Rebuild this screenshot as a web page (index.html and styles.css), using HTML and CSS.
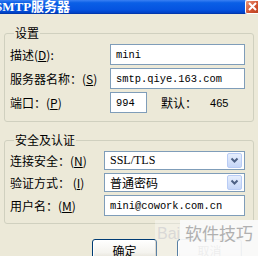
FILE: index.html
```html
<!DOCTYPE html>
<html>
<head>
<meta charset="utf-8">
<link rel="stylesheet" href="styles.css">
</head>
<body>
<div class="window">
  <div class="titlebar">
    <span class="title">SMTP服务器</span>
    <span class="close"><svg width="9" height="9" viewBox="0 0 9 9"><path d="M1 1L8 8M8 1L1 8" stroke="#fff" stroke-width="2"/></svg></span>
  </div>
  <div class="content">
    <fieldset class="group g1">
      <legend>设置</legend>
      <div class="row">
        <span class="label w1">描述(<u>D</u>):</span>
        <div class="field grow"><span class="mono">mini</span></div>
      </div>
      <div class="row">
        <span class="label w1">服务器名称：(<u>S</u>)</span>
        <div class="field grow"><span class="mono">smtp.qiye.163.com</span></div>
      </div>
      <div class="row">
        <span class="label w1">端口：(<u>P</u>)</span>
        <div class="field port"><span class="mono">994</span></div>
        <span class="label def">默认：</span>
        <span class="label num">465</span>
      </div>
    </fieldset>
    <fieldset class="group g2">
      <legend>安全及认证</legend>
      <div class="row r2">
        <span class="label w2">连接安全：(<u>N</u>)</span>
        <div class="field grow select"><span class="serif">SSL/TLS</span><span class="drop"><svg width="9" height="7" viewBox="0 0 9 7"><path d="M1.5 1.5L4.5 4.5L7.5 1.5" fill="none" stroke="#4D6185" stroke-width="2"/></svg></span></div>
      </div>
      <div class="row r2">
        <span class="label w2">验证方式： (<u>I</u>)</span>
        <div class="field grow select"><span class="cjk">普通密码</span><span class="drop"><svg width="9" height="7" viewBox="0 0 9 7"><path d="M1.5 1.5L4.5 4.5L7.5 1.5" fill="none" stroke="#4D6185" stroke-width="2"/></svg></span></div>
      </div>
      <div class="row r3">
        <span class="label w2">用户名：(<u>M</u>)</span>
        <div class="field grow"><span class="mono">mini@cowork.com.cn</span></div>
      </div>
    </fieldset>
    <div class="buttons">
      <span class="btn">确定</span>
      <span class="btn">取消</span>
    </div>
  </div>
  <div class="watermark"><span class="bai">Bai</span><span class="wm-box">软件技巧</span></div>
</div>
</body>
</html>
```
FILE: styles.css
```css
html, body {
  margin: 0;
  padding: 0;
}
body {
  width: 258px;
  height: 256px;
  overflow: hidden;
  background: #ECE9D8;
  font-family: "Noto Sans CJK SC", sans-serif;
  font-size: 12px;
  color: #000;
}
.window {
  position: relative;
  width: 258px;
  height: 256px;
}
.titlebar {
  height: 14px;
  background: linear-gradient(#3A80F3 0%, #0A5FE6 20%, #0553E0 70%, #0043C8 90%, #00309E 100%);
  display: flex;
  align-items: center;
  justify-content: space-between;
  overflow: hidden;
}
.title {
  color: #fff;
  font-weight: bold;
  font-size: 13px;
  line-height: 14px;
  margin-left: -5px;
  font-family: "Liberation Serif", "Noto Sans CJK SC", serif;
}
.close {
  width: 12px;
  height: 12px;
  margin-top: -1px;
  background: linear-gradient(135deg, #E9967A, #D2522F 60%, #B8401F);
  border: 1px solid #fff;
  border-right: none;
  border-radius: 2px 0 0 2px;
  display: flex;
  align-items: center;
  justify-content: center;
}
.content {
  padding: 12px 4px 0 4px;
}
.group {
  margin: 0;
  border: 1px solid #D0D0BF;
  border-radius: 3px;
  padding: 4px 4px 7px 5px;
  display: flex;
  flex-direction: column;
  gap: 3px;
  min-width: 0;
}
.g1 {
  padding-bottom: 8px;
}
.g2 {
  margin-top: 11px;
}
legend {
  padding: 0 1px;
  margin-left: 4px;
  line-height: 14px;
  height: 14px;
}
.row {
  display: flex;
  align-items: center;
  height: 21px;
}
.r2 {
  height: 19px;
}
.r3 {
  height: 21px;
}
.label {
  white-space: nowrap;
  line-height: 14px;
}
.label u {
  text-decoration: underline;
  text-underline-offset: 1px;
}
.w1 {
  width: 100px;
  flex: none;
}
.w2 {
  width: 94px;
  flex: none;
}
.field {
  height: 100%;
  box-sizing: border-box;
  border: 1px solid #7F9DB9;
  background: #fff;
  display: flex;
  align-items: center;
  padding-left: 5px;
}
.grow {
  flex: 1;
  min-width: 0;
  margin-right: 4px;
}
.port {
  width: 37px;
  flex: none;
}
.def {
  margin-left: 14px;
}
.num {
  margin-left: 13px;
  font-family: "Liberation Sans", sans-serif;
  font-size: 11px;
}
.mono {
  font-family: "Liberation Mono", monospace;
  font-size: 10.4px;
  white-space: nowrap;
}
.serif {
  font-family: "Liberation Serif", serif;
  font-size: 12px;
  flex: 1;
}
.cjk {
  font-size: 12px;
  flex: 1;
}
.select {
  padding-right: 1px;
}
.drop {
  width: 15px;
  height: 15px;
  box-sizing: border-box;
  border: 1px solid #B9CCF5;
  border-radius: 2px;
  background: linear-gradient(#E6EEFD, #C5D6F8);
  display: flex;
  align-items: center;
  justify-content: center;
  margin-right: 1px;
}
.buttons {
  display: flex;
  justify-content: flex-end;
  gap: 20px;
  padding-right: 12px;
  margin-top: 15px;
}
.btn {
  width: 65px;
  height: 23px;
  box-sizing: border-box;
  border: 1px solid #003C74;
  border-radius: 3px;
  background: linear-gradient(#FFFFFF, #F4F3EE 60%, #DCD8CC);
  box-shadow: inset -1px -1px 0 #C9C4B5, inset 1px 1px 0 #fff;
  display: flex;
  align-items: center;
  justify-content: center;
  font-size: 12px;
}
.watermark {
  position: absolute;
  left: 155px;
  top: 220px;
  width: 103px;
  height: 36px;
  display: flex;
}
.bai {
  width: 23px;
  padding-top: 5px;
  padding-left: 2px;
  font-family: "Liberation Sans", sans-serif;
  font-size: 16px;
  color: rgba(200, 200, 205, 0.6);
  background: rgba(255, 255, 255, 0.35);
}
.wm-box {
  flex: 1;
  background: rgba(250, 250, 250, 0.95);
  color: #B0B0B0;
  font-size: 17px;
  line-height: 22px;
  padding: 2px 0 0 5px;
}
```
